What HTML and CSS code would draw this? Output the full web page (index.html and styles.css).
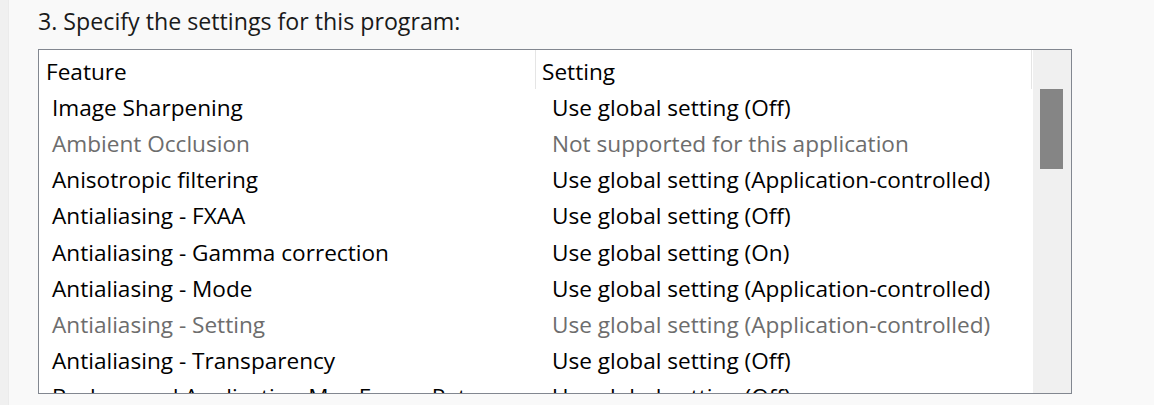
FILE: index.html
```html
<!DOCTYPE html>
<html>
  <head>
    <link rel="stylesheet" href="styles.css">
  </head>
  <body>
    <div class="edge"></div>
    <div class="panel">
      <p class="title">3. Specify the settings for this program:</p>
      <div class="listbox">
        <div class="list">
          <div class="header">
            <div class="col feature">Feature</div>
            <div class="col setting">Setting</div>
          </div>
          <div class="row"><span class="feature">Image Sharpening</span><span class="setting">Use global setting (Off)</span></div>
          <div class="row disabled"><span class="feature">Ambient Occlusion</span><span class="setting">Not supported for this application</span></div>
          <div class="row"><span class="feature">Anisotropic filtering</span><span class="setting">Use global setting (Application-controlled)</span></div>
          <div class="row"><span class="feature">Antialiasing - FXAA</span><span class="setting">Use global setting (Off)</span></div>
          <div class="row"><span class="feature">Antialiasing - Gamma correction</span><span class="setting">Use global setting (On)</span></div>
          <div class="row"><span class="feature">Antialiasing - Mode</span><span class="setting">Use global setting (Application-controlled)</span></div>
          <div class="row disabled"><span class="feature">Antialiasing - Setting</span><span class="setting">Use global setting (Application-controlled)</span></div>
          <div class="row"><span class="feature">Antialiasing - Transparency</span><span class="setting">Use global setting (Off)</span></div>
          <div class="row"><span class="feature">Background Application Max Frame Rate</span><span class="setting">Use global setting (Off)</span></div>
        </div>
        <div class="scrollbar">
          <div class="thumb"></div>
        </div>
      </div>
    </div>
  </body>
</html>
```

FILE: styles.css
```css
body {
  margin: 0;
  background-color: #f9f9f9;
  font-family: "Open Sans", "Noto Sans", sans-serif;
  font-size: 22.6px;
  color: #000;
  display: flex;
  height: 405px;
  overflow: hidden;
}

.edge {
  width: 8px;
  background-color: #f0f0f0;
  border-right: 1px solid #ebebeb;
}

.panel {
  padding-left: 29px;
}

.title {
  margin: 0;
  height: 49px;
  line-height: 42px;
  font-size: 23.2px;
  color: #1a1a1a;
}

.listbox {
  width: 1032px;
  height: 343px;
  border: 1px solid #828790;
  background-color: #fff;
  display: flex;
  overflow: hidden;
}

.list {
  flex: 1;
  overflow: hidden;
}

.header {
  display: flex;
  height: 40px;
  line-height: 44px;
}

.header .col {
  border-right: 1px solid #e5e5e5;
  height: 39px;
}

.header .feature {
  width: 489px;
  padding-left: 7px;
}

.header .setting {
  width: 489px;
  padding-left: 6px;
}

.row {
  display: flex;
  height: 36.15px;
  line-height: 36px;
  white-space: nowrap;
}

.row .feature {
  width: 484px;
  padding-left: 13px;
  overflow: hidden;
}

.row .setting {
  padding-left: 16px;
}

.row.disabled {
  color: #6d6d6d;
}

.scrollbar {
  width: 38px;
  margin-left: 1px;
  background-color: #f0f0f0;
  padding: 39px 7px 0 7px;
  box-sizing: border-box;
}

.thumb {
  width: 23px;
  height: 80px;
  background-color: #858585;
}
```
